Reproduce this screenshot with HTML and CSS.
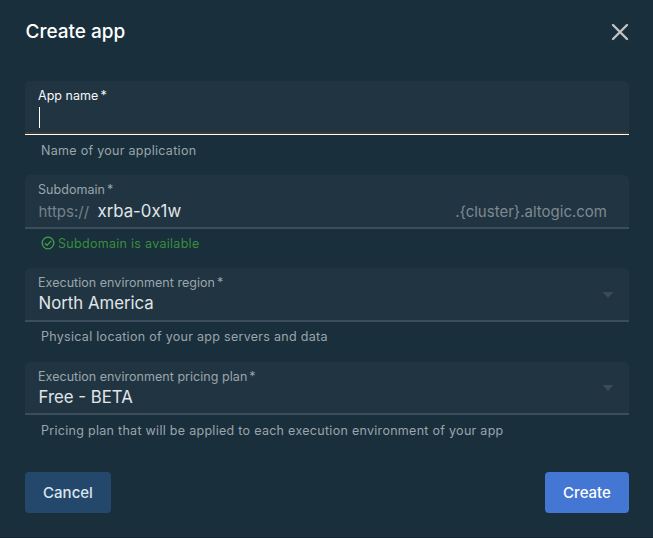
FILE: index.html
```html
<!DOCTYPE html>
<html lang="en">
<head>
<meta charset="utf-8">
<title>Create app</title>
<link rel="stylesheet" href="styles.css">
</head>
<body>
<main class="dialog">
  <header class="header">
    <h1 class="title">Create app</h1>
    <svg class="close" viewBox="0 0 18 18"><path d="M2 2 16 16M16 2 2 16"/></svg>
  </header>
  <form class="form">
    <div class="group group-name">
      <div class="field field-focused">
        <div class="label">App name<span class="star">*</span></div>
        <div class="value"><span class="caret"></span></div>
      </div>
      <div class="hint">Name of your application</div>
    </div>
    <div class="group">
      <div class="field">
        <div class="label">Subdomain<span class="star">*</span></div>
        <div class="value"><span class="prefix">https://</span><span>xrba-0x1w</span><span class="suffix">.{cluster}.altogic.com</span></div>
      </div>
      <div class="hint hint-ok"><svg class="check" viewBox="0 0 14 14"><circle cx="7" cy="7" r="5.8"/><path d="M3.9 7.3 6 9.3 10.2 4.9"/></svg><span>Subdomain is available</span></div>
    </div>
    <div class="group group-region">
      <div class="field">
        <div class="label">Execution environment region<span class="star">*</span></div>
        <div class="value value-select"><span>North America</span><svg class="arrow" viewBox="0 0 12 6"><path d="M.5 0h11L6 6z"/></svg></div>
      </div>
      <div class="hint">Physical location of your app servers and data</div>
    </div>
    <div class="group group-plan">
      <div class="field">
        <div class="label">Execution environment pricing plan<span class="star">*</span></div>
        <div class="value value-select"><span>Free - BETA</span><svg class="arrow" viewBox="0 0 12 6"><path d="M.5 0h11L6 6z"/></svg></div>
      </div>
      <div class="hint">Pricing plan that will be applied to each execution environment of your app</div>
    </div>
    <footer class="actions">
      <button type="button" class="button">Cancel</button>
      <button type="button" class="button button-primary">Create</button>
    </footer>
  </form>
</main>
</body>
</html>
```
FILE: styles.css
```css
* { box-sizing: border-box; }
body {
  margin: 0;
  background: #192f3b;
  font-family: Inter, "Liberation Sans", sans-serif;
  color: #e1e5e8;
}
.dialog {
  width: 653px;
  height: 538px;
  padding: 19px 24px 0 25px;
  border-bottom: 1px solid #152633;
}
.header {
  display: flex;
  justify-content: space-between;
  height: 62px;
}
.title {
  margin: 1px 0 0 0.5px;
  font-size: 19px;
  line-height: 24px;
  font-weight: 500;
  color: #fff;
}
.close {
  width: 18px;
  height: 18px;
  margin-top: 4px;
  fill: none;
  stroke: #c2c2c2;
  stroke-width: 2.4;
  stroke-linecap: round;
}
.group { height: 93px; }
.group-name { height: 94px; }
.group-region { height: 94px; }
.group-plan { height: 110px; }
.field {
  height: 54px;
  padding: 7px 22px 0 13px;
  background: #203541;
  border-bottom: 2px solid #3c4d5b;
  border-radius: 5px 5px 0 0;
}
.group-plan .field { height: 53px; }
.field-focused {
  border-bottom: 1px solid #fff;
  box-shadow: inset 0 -2px #433831;
}
.label {
  font-size: 12.5px;
  line-height: 15px;
  letter-spacing: .04px;
  color: #9ba5ac;
}
.field-focused .label { color: #f5f7f8; }
.star { margin-left: 2px; }
.value {
  display: flex;
  align-items: center;
  height: 26px;
  margin-top: 1px;
  font-size: 16.8px;
}
.value-select { margin-top: 0; padding-left: .5px; }
.caret { width: 1px; height: 21px; margin: 1px 0 0 1px; background: #fff; }
.prefix { width: 59.5px; padding-left: .5px; font-size: 15px; color: #75818b; }
.suffix { margin-left: auto; font-size: 15px; color: #7e8992; }
.arrow { width: 12px; height: 6px; margin: -16px -7px 0 auto; fill: #3a4b56; }
.group-plan .arrow { margin-top: -18px; }
.hint {
  display: flex;
  align-items: center;
  height: 16px;
  margin: 7px 0 0 16px;
  font-size: 12.5px;
  letter-spacing: .29px;
  color: #9ba5ac;
}
.hint-ok { color: #388e3c; }
.group-region .hint, .hint-ok { margin-top: 6px; }
.check {
  width: 14px;
  height: 14px;
  margin: 0 3.5px 0 -.5px;
  fill: none;
  stroke: #43a047;
  stroke-width: 1.3;
}
.actions { display: flex; justify-content: space-between; }
.button {
  width: 86px;
  height: 41px;
  padding: 0;
  border: 0;
  border-radius: 4px;
  background: #24486c;
  font: 500 15px/41px Inter, "Liberation Sans", sans-serif;
  color: #dce5ec;
}
.button-primary { width: 84px; background: #4377d3; color: #fff; }
```
